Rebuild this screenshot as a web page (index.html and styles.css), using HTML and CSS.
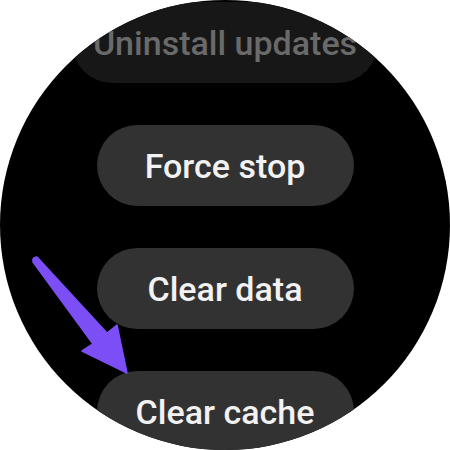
FILE: index.html
```html
<!DOCTYPE html>
<html>
<head>
<meta charset="utf-8">
<link rel="stylesheet" href="styles.css">
</head>
<body>
<div class="watch">
  <div class="list">
    <div class="pill pill-dim">Uninstall updates</div>
    <div class="pill">Force stop</div>
    <div class="pill">Clear data</div>
    <div class="pill">Clear cache</div>
  </div>
  <svg class="arrow" width="450" height="450" viewBox="0 0 450 450">
    <path d="M33 262 Q32 257 37 257 L107 333 L117 325 L127 373 L82 351 L93 344 Z" fill="#7c4ff6" stroke="#7c4ff6" stroke-width="1.5" stroke-linejoin="round"/>
  </svg>
</div>
</body>
</html>
```
FILE: styles.css
```css
html, body {
  margin: 0;
  padding: 0;
  background: #ffffff;
}
.watch {
  position: relative;
  width: 450px;
  height: 450px;
  border-radius: 50%;
  background: #000000;
  overflow: hidden;
}
.list {
  display: flex;
  flex-direction: column;
  align-items: center;
  gap: 42px;
  padding-top: 2px;
}
.pill {
  box-sizing: border-box;
  height: 81px;
  min-width: 257px;
  padding: 0 21px;
  border-radius: 41px;
  background: #323232;
  color: #f2f2f2;
  font-family: Roboto, "Noto Sans", sans-serif;
  font-size: 34px;
  font-weight: 500;
  display: flex;
  align-items: center;
  justify-content: center;
  white-space: nowrap;
}
.pill-dim {
  background: #171717;
  color: #6a6a6a;
}
.arrow {
  position: absolute;
  left: 0;
  top: 0;
}
```
